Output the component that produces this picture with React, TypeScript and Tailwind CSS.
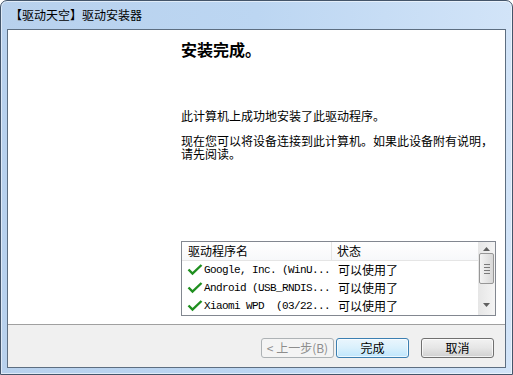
import React from "react";

const cjk = { fontFamily: '"Noto Sans CJK SC", "Noto Sans", sans-serif' };
const mono = { fontFamily: '"Liberation Mono", "Noto Sans CJK SC", monospace' };

const rows = [
  "Google, Inc. (WinU...",
  "Android (USB_RNDIS...",
  "Xiaomi WPD  (03/22...",
];

function Check() {
  return (
    <svg width="16" height="12" viewBox="0 0 16 12" className="shrink-0">
      <path d="M1.5 5.5 L5.5 9.5 L14.5 1" fill="none" stroke="#1f8f1f" strokeWidth="2.4" />
    </svg>
  );
}

function Scrollbar() {
  return (
    <div className="flex w-[17px] flex-col bg-gradient-to-r from-[#e6e6e6] to-[#f4f4f4]">
      <div className="flex h-[10px] items-end justify-center pb-[1px]">
        <svg width="7" height="4" viewBox="0 0 7 4">
          <path d="M0 4 L3.5 0 L7 4 Z" fill="#606060" />
        </svg>
      </div>
      <div className="mx-auto mt-[1px] flex h-[31px] w-[15px] flex-col items-center justify-center gap-[2px] rounded-[2px] border border-[#979797] bg-gradient-to-r from-[#f3f3f3] to-[#d8d8d8]">
        <div className="h-px w-[6px] bg-[#7a7a7a]" />
        <div className="h-px w-[6px] bg-[#7a7a7a]" />
        <div className="h-px w-[6px] bg-[#7a7a7a]" />
        <div className="h-px w-[6px] bg-[#7a7a7a]" />
      </div>
      <div className="flex flex-1 items-end justify-center pb-[8px]">
        <svg width="7" height="4" viewBox="0 0 7 4">
          <path d="M0 0 L3.5 4 L7 0 Z" fill="#606060" />
        </svg>
      </div>
    </div>
  );
}

function DriverList() {
  return (
    <div className="mt-[81px] flex h-[75px] w-[315px] overflow-hidden border border-[#828790] bg-white">
      <div className="flex flex-1 flex-col">
        <div className="flex h-[22px] border-b border-[#e5e5e5] bg-gradient-to-b from-white to-[#f7f8fa] text-[12px] leading-[12px] text-black">
          <div className="flex w-[150px] items-center border-r border-[#e5e5e5] pl-[6px]">驱动程序名</div>
          <div className="flex items-center pl-[5px]">状态</div>
        </div>
        {rows.map((r) => (
          <div key={r} className="flex h-[18px] shrink-0 items-center text-[12px] leading-[12px]">
            <div className="flex w-[150px] items-center pl-[5px]">
              <Check />
              <span className="ml-[1px] whitespace-pre text-[11px] tracking-[-0.6px] text-black" style={mono}>
                {r}
              </span>
            </div>
            <div className="pl-[6px] text-black">可以使用了</div>
          </div>
        ))}
      </div>
      <Scrollbar />
    </div>
  );
}

export default function App() {
  return (
    <div
      className="flex h-[375px] w-[513px] flex-col rounded-t-[7px] border border-[#44556a] bg-gradient-to-r from-[#b8d1ed] via-[#bcd6f2] to-[#d2e4f8] px-[6px] pb-[6px] shadow-[inset_0_0_0_1px_rgba(255,255,255,0.55)]"
      style={cjk}
    >
      <div className="flex h-[28px] items-center pl-[3px] text-[12px] leading-[12px] text-black">
        【驱动天空】驱动安装器
      </div>
      <div className="flex flex-1 flex-col border border-[#5d6e81] bg-white">
        <div className="flex flex-1 flex-col pl-[173px] pt-[11px] text-black">
          <div className="text-[16px] font-bold leading-[16px]">安装完成。</div>
          <div className="mt-[53px] text-[12px] leading-[12px]">此计算机上成功地安装了此驱动程序。</div>
          <div className="mt-[13px] whitespace-nowrap text-[12px] leading-[12px]">
            现在您可以将设备连接到此计算机。如果此设备附有说明，
          </div>
          <div className="mt-[1px] text-[12px] leading-[12px]">请先阅读。</div>
          <DriverList />
        </div>
        <div className="flex h-[43px] items-start justify-end border-t border-[#a0a0a0] bg-[#f0f0f0] pr-[11px] pt-[13px] text-[12px] leading-[12px]">
          <button className="flex h-[20px] w-[73px] items-center justify-center rounded-[3px] border border-[#adb2b5] bg-[#f4f4f4] text-[#8d8d8d]">
            &lt; 上一步(B)
          </button>
          <button className="ml-[2px] flex h-[20px] w-[73px] items-center justify-center rounded-[3px] border border-[#3c7fb1] bg-gradient-to-b from-[#eaf6fd] via-[#d9f0fc] to-[#bee6fd] text-black shadow-[inset_0_0_0_1px_rgba(255,255,255,0.7)]">
            完成
          </button>
          <button className="ml-[12px] flex h-[20px] w-[73px] items-center justify-center rounded-[3px] border border-[#707070] bg-gradient-to-b from-[#f2f2f2] via-[#e6e6e6] to-[#d0d0d0] text-black shadow-[inset_0_0_0_1px_rgba(255,255,255,0.7)]">
            取消
          </button>
        </div>
      </div>
    </div>
  );
}
